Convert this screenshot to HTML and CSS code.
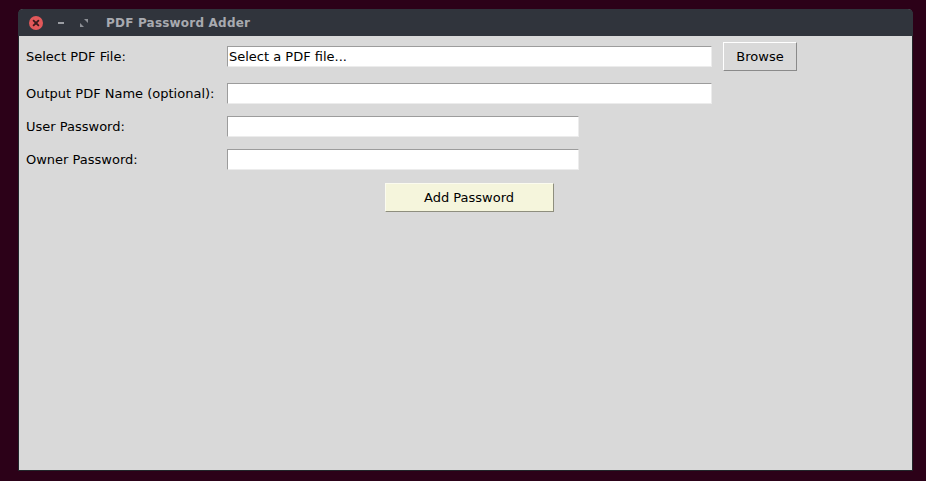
FILE: index.html
```html
<!DOCTYPE html>
<html>
<head>
<meta charset="utf-8">
<link rel="stylesheet" href="styles.css">
</head>
<body>
<div class="window">
  <div class="titlebar">
    <span class="btn-close">
      <svg width="14" height="14" viewBox="0 0 14 14"><circle cx="7" cy="7" r="7" fill="#e2585a"/><path d="M4.6 4.6 L9.4 9.4 M9.4 4.6 L4.6 9.4" stroke="#3b1a1c" stroke-width="1.8" stroke-linecap="round"/></svg>
    </span>
    <span class="btn-min">
      <svg width="8" height="4" viewBox="0 0 8 4"><rect x="1" y="1" width="6" height="2" fill="#9a9da3"/></svg>
    </span>
    <span class="btn-max">
      <svg width="10" height="10" viewBox="0 0 10 10"><path d="M5 1 H9 V5 Z" fill="#8d9096"/><path d="M1 5 V9 H5 Z" fill="#8d9096"/></svg>
    </span>
    <span class="title">PDF Password Adder</span>
  </div>
  <div class="content">
    <div class="form">
      <div class="label r1">Select PDF File:</div>
      <div class="field r1"><div class="entry wide">Select a PDF file...</div></div>
      <div class="side r1"><div class="button">Browse</div></div>

      <div class="label r2">Output PDF Name (optional):</div>
      <div class="field r2"><div class="entry wide"></div></div>
      <div class="side r2"></div>

      <div class="label r3">User Password:</div>
      <div class="field r3"><div class="entry narrow"></div></div>
      <div class="side r3"></div>

      <div class="label r4">Owner Password:</div>
      <div class="field r4"><div class="entry narrow"></div></div>
      <div class="side r4"></div>

      <div class="label r5"></div>
      <div class="field r5 center"><div class="button add">Add Password</div></div>
      <div class="side r5"></div>
    </div>
  </div>
</div>
</body>
</html>
```
FILE: styles.css
```css
html, body {
  margin: 0;
  padding: 0;
  background: #2c0118;
  width: 926px;
  height: 481px;
  overflow: hidden;
}
.window {
  margin: 9px 0 0 18px;
  width: 893px;
  height: 461px;
  border: 1px solid #23262b;
  border-top: none;
  border-radius: 5px 5px 0 0;
  background: #d9d9d9;
  display: flex;
  flex-direction: column;
}
.titlebar {
  height: 27px;
  background: #30343c;
  border-radius: 5px 5px 0 0;
  display: flex;
  align-items: center;
  padding-left: 10px;
  flex-shrink: 0;
  margin: 0 -1px;
}
.btn-close { width: 14px; height: 14px; display: flex; margin-left: 1px; }
.btn-min { width: 8px; height: 4px; display: flex; margin-left: 14px; margin-top: 1px; }
.btn-max { width: 10px; height: 10px; display: flex; margin-left: 14px; }
.title {
  margin-left: 17px;
  font-family: "DejaVu Sans", sans-serif;
  font-weight: bold;
  font-size: 12px;
  color: #a8aab0;
  letter-spacing: 0.2px;
}
.content {
  flex: 1;
  font-family: "DejaVu Sans", sans-serif;
  font-size: 13px;
  color: #000;
}
.form {
  display: grid;
  grid-template-columns: 202px 496px 81px;
  grid-template-rows: 41px 33px 33px 33px 36px;
}
.label {
  display: flex;
  align-items: center;
  padding-left: 7px;
  white-space: nowrap;
}
.field, .side {
  display: flex;
  align-items: center;
  padding-left: 6px;
}
.field.center {
  justify-content: center;
  align-items: flex-start;
  padding-left: 0;
  padding-top: 7px;
}
.side { padding-left: 6px; }
.entry {
  height: 19px;
  background: #fff;
  border-top: 1px solid #9c9c9c;
  border-left: 1px solid #9c9c9c;
  border-bottom: 1px solid #ececec;
  border-right: 1px solid #ececec;
  line-height: 19px;
  padding-left: 1px;
  box-sizing: content-box;
  white-space: nowrap;
}
.entry.wide { width: 482px; }
.entry.narrow { width: 349px; }
.button {
  height: 27px;
  width: 72px;
  display: flex;
  align-items: center;
  justify-content: center;
  background: #d9d9d9;
  border-top: 1px solid #ffffff;
  border-left: 1px solid #ffffff;
  border-bottom: 1px solid #8a8a8a;
  border-right: 1px solid #8a8a8a;
}
.button.add {
  width: 167px;
  height: 27px;
  background: #f5f5dc;
  border-top: 1px solid #fbfbef;
  border-left: 1px solid #fbfbef;
  border-bottom: 1px solid #8e8e7e;
  border-right: 1px solid #8e8e7e;
}
```
